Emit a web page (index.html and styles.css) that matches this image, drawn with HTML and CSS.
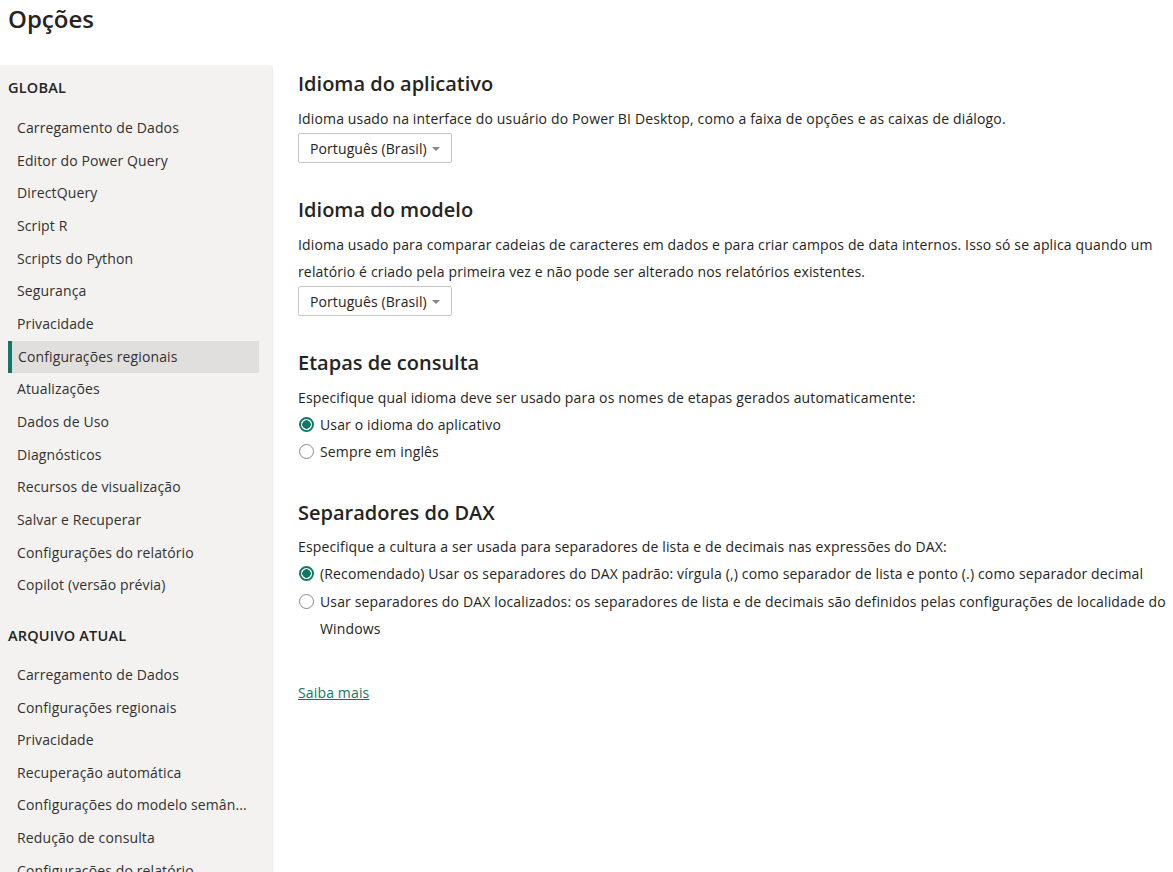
FILE: index.html
```html
<!DOCTYPE html>
<html lang="pt-BR">
<head>
<meta charset="utf-8">
<title>Opções</title>
<link rel="stylesheet" href="styles.css">
</head>
<body>
<h1 class="title">Opções</h1>
<div class="layout">
  <nav class="sidebar">
    <div class="group-title">GLOBAL</div>
    <ul class="nav-list">
      <li class="nav-item">Carregamento de Dados</li>
      <li class="nav-item">Editor do Power Query</li>
      <li class="nav-item">DirectQuery</li>
      <li class="nav-item">Script R</li>
      <li class="nav-item">Scripts do Python</li>
      <li class="nav-item">Segurança</li>
      <li class="nav-item">Privacidade</li>
      <li class="nav-item selected">Configurações regionais</li>
      <li class="nav-item">Atualizações</li>
      <li class="nav-item">Dados de Uso</li>
      <li class="nav-item">Diagnósticos</li>
      <li class="nav-item">Recursos de visualização</li>
      <li class="nav-item">Salvar e Recuperar</li>
      <li class="nav-item">Configurações do relatório</li>
      <li class="nav-item">Copilot (versão prévia)</li>
    </ul>
    <div class="group-title second">ARQUIVO ATUAL</div>
    <ul class="nav-list">
      <li class="nav-item">Carregamento de Dados</li>
      <li class="nav-item">Configurações regionais</li>
      <li class="nav-item">Privacidade</li>
      <li class="nav-item">Recuperação automática</li>
      <li class="nav-item">Configurações do modelo semân...</li>
      <li class="nav-item">Redução de consulta</li>
      <li class="nav-item">Configurações do relatório</li>
    </ul>
  </nav>
  <main class="content">
    <section class="section">
      <h2 class="heading">Idioma do aplicativo</h2>
      <p class="desc">Idioma usado na interface do usuário do Power BI Desktop, como a faixa de opções e as caixas de diálogo.</p>
      <div class="dropdown"><span>Português (Brasil)</span><span class="caret"></span></div>
    </section>
    <section class="section">
      <h2 class="heading">Idioma do modelo</h2>
      <p class="desc">Idioma usado para comparar cadeias de caracteres em dados e para criar campos de data internos. Isso só se aplica quando um<br>relatório é criado pela primeira vez e não pode ser alterado nos relatórios existentes.</p>
      <div class="dropdown"><span>Português (Brasil)</span><span class="caret"></span></div>
    </section>
    <section class="section">
      <h2 class="heading">Etapas de consulta</h2>
      <p class="desc">Especifique qual idioma deve ser usado para os nomes de etapas gerados automaticamente:</p>
      <div class="radio-row"><span class="radio checked"></span><span>Usar o idioma do aplicativo</span></div>
      <div class="radio-row"><span class="radio"></span><span>Sempre em inglês</span></div>
    </section>
    <section class="section">
      <h2 class="heading">Separadores do DAX</h2>
      <p class="desc">Especifique a cultura a ser usada para separadores de lista e de decimais nas expressões do DAX:</p>
      <div class="radio-row"><span class="radio checked"></span><span>(Recomendado) Usar os separadores do DAX padrão: vírgula (,) como separador de lista e ponto (.) como separador decimal</span></div>
      <div class="radio-row"><span class="radio"></span><span>Usar separadores do DAX localizados: os separadores de lista e de decimais são definidos pelas configurações de localidade do<br>Windows</span></div>
    </section>
    <a class="link" href="#">Saiba mais</a>
  </main>
</div>
</body>
</html>
```
FILE: styles.css
```css
* { box-sizing: border-box; }
html, body { margin: 0; padding: 0; }
body {
  font-family: "Open Sans", "Noto Sans", sans-serif;
  color: #252423;
  background: #ffffff;
  width: 1173px;
  height: 872px;
  overflow: hidden;
}
.title {
  margin: 0;
  height: 65px;
  padding: 2px 0 0 8px;
  font-size: 24px;
  font-weight: 600;
  line-height: 34px;
  color: #252423;
}
.layout {
  display: flex;
  align-items: flex-start;
}
.sidebar {
  width: 272px;
  flex: none;
  height: 820px;
  background: #f3f2f1;
  border-top-right-radius: 4px;
  box-shadow: 1px 0 1px rgba(0,0,0,0.08);
  padding: 8px 13px 0 8px;
}
.group-title {
  height: 30px;
  line-height: 30px;
  font-size: 14.5px;
  font-weight: 600;
  letter-spacing: 0.2px;
  color: #252423;
  margin-bottom: 9px;
}
.group-title.second {
  margin-top: 19px;
  margin-bottom: 8px;
}
.nav-list {
  list-style: none;
  margin: 0;
  padding: 0;
}
.nav-item {
  height: 32.67px;
  line-height: 32.67px;
  padding-left: 9px;
  font-size: 14px;
  letter-spacing: 0.12px;
  color: #323130;
  white-space: nowrap;
  overflow: hidden;
}
.nav-item.selected {
  background: #e1dfdd;
  border-left: 4px solid #117865;
  padding-left: 6px;
}
.content {
  flex: 1;
  padding: 5px 0 0 26px;
  white-space: nowrap;
}
.section { margin-bottom: 33px; }
.heading {
  margin: 0 0 6.5px;
  height: 28px;
  line-height: 28px;
  font-size: 20px;
  font-weight: 600;
  color: #252423;
}
.desc {
  margin: 0;
  font-size: 14px;
  letter-spacing: 0.15px;
  line-height: 27px;
  color: #252423;
}
.dropdown {
  margin-top: 1.5px;
  width: 154px;
  height: 30px;
  border: 1px solid #c8c6c4;
  border-radius: 2px;
  display: flex;
  align-items: center;
  justify-content: space-between;
  padding: 0 11px 0 11px;
  font-size: 14px;
  letter-spacing: 0.1px;
  color: #252423;
}
.caret {
  width: 0;
  height: 0;
  border-left: 4px solid transparent;
  border-right: 4px solid transparent;
  border-top: 4px solid #8a8886;
  margin-top: 1px;
}
.radio-row {
  display: flex;
  align-items: flex-start;
  font-size: 14px;
  letter-spacing: 0.15px;
  line-height: 27.5px;
  color: #252423;
}
.radio {
  flex: none;
  width: 15px;
  height: 15px;
  border: 1px solid #8a8886;
  border-radius: 50%;
  margin: 6px 6px 0 1px;
  background: #fff;
}
.radio.checked {
  border: 2px solid #117865;
  background: radial-gradient(circle, #117865 0 4px, #fff 4.5px);
}
.link {
  display: inline-block;
  margin-top: 3px;
  font-size: 14px;
  letter-spacing: 0.15px;
  line-height: 27px;
  color: #117865;
  text-decoration: underline;
}
```
